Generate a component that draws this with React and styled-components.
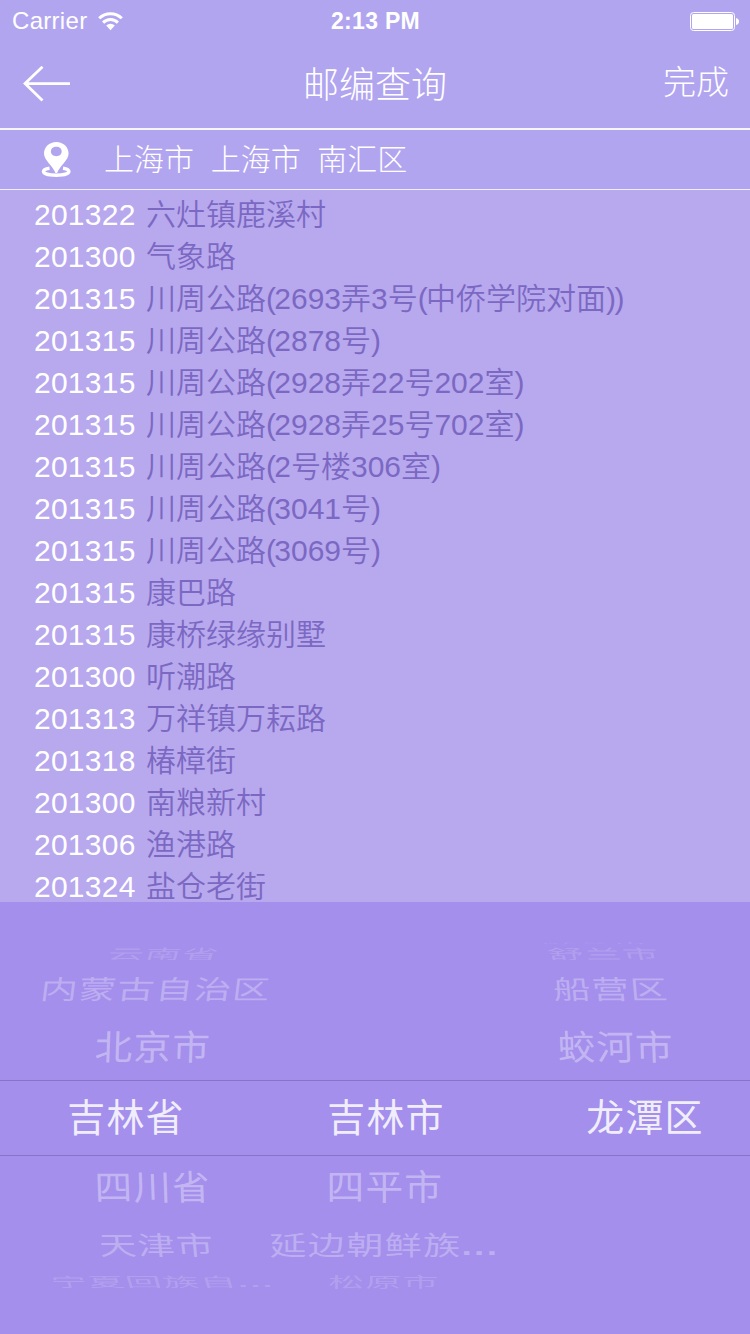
import React from "react";
import styled, { createGlobalStyle } from "styled-components";

const sans = '"Liberation Sans", "Noto Sans CJK SC", sans-serif';

const GlobalStyle = createGlobalStyle`
  body { margin: 0; }
  * { box-sizing: border-box; }
`;

const Screen = styled.div`
  width: 750px;
  height: 1334px;
  display: flex;
  flex-direction: column;
  overflow: hidden;
  background: #b2a5f0;
  color: #fff;
  font-family: ${sans};
  font-weight: 300;
`;

const StatusBar = styled.div`
  height: 40px;
  flex: none;
  display: grid;
  grid-template-columns: 1fr auto 1fr;
  align-items: center;
  padding: 1px 11px 0 12px;
  font-size: 24px;
  line-height: 40px;
`;

const Carrier = styled.div`
  display: flex;
  align-items: center;
  gap: 11px;
  letter-spacing: 0.3px;
`;

const Clock = styled.div`
  font-weight: 700;
  font-size: 23px;
  letter-spacing: 0.3px;
`;

const BatterySlot = styled.div`
  display: flex;
  justify-content: flex-end;
`;

const NavBar = styled.header`
  height: 88px;
  flex: none;
  display: grid;
  grid-template-columns: 1fr auto 1fr;
  align-items: center;
  padding: 0 20px 0 23px;
`;

const Title = styled.h1`
  margin: 0;
  padding: 2px 3px 0 0;
  font: inherit;
  font-size: 36px;
  line-height: 85px;
`;

const DoneButton = styled.button`
  justify-self: end;
  padding: 0 1px 2px 0;
  border: 0;
  background: none;
  color: inherit;
  font: inherit;
  font-size: 33px;
  line-height: 84px;
`;

const LocationBar = styled.div`
  height: 62px;
  flex: none;
  display: flex;
  align-items: center;
  gap: 32px;
  padding-left: 41px;
  border-top: 2px solid #f7f5fd;
  border-bottom: 1px solid #f0edfc;
  font-size: 30px;
  white-space: pre;
`;

const Place = styled.span`
  padding-bottom: 5px;
`;

const List = styled.ul`
  height: 712px;
  flex: none;
  margin: 0;
  padding: 4px 0 0 34px;
  list-style: none;
  overflow: hidden;
  background: #b8a8ee;
`;

const Entry = styled.li`
  height: 42px;
  display: flex;
  gap: 11px;
  font-size: 30px;
  line-height: 42px;
`;

const Code = styled.span`
  width: 101px;
  letter-spacing: 0.25px;
`;

const Address = styled.span`
  color: #7b68c3;
  font-weight: 350;
  white-space: nowrap;
`;

const Bracket = styled.span`
  margin-right: -1.7px;
`;

const Picker = styled.section`
  flex: 1;
  display: grid;
  grid-template-columns: 250px 270px 230px;
  background: #a48fec;
`;

const Wheel = styled.div`
  display: flex;
  flex-direction: column;
  padding-top: 34px;
`;

const Slot = styled.div`
  height: ${(p) => p.$height}px;
  flex: none;
  display: flex;
  align-items: center;
  justify-content: center;
  border: solid #8873c5;
  border-width: ${(p) => (p.$selected ? "1px 0" : "0")};
`;

const Option = styled.span`
  font-size: 38px;
  line-height: 40px;
  font-weight: 400;
  letter-spacing: 1.2px;
  white-space: nowrap;
  color: rgba(255, 255, 255, ${(p) => p.$alpha});
  transform: translate(${(p) => p.$shift}px, ${(p) => p.$drop}px)
    skewX(${(p) => p.$skew}deg) scale(${(p) => p.$sx}, ${(p) => p.$sy});
`;

const Dots = styled.span`
  font-weight: 700;
  letter-spacing: 2.3px;
`;

const entries = [
  ["201322", "六灶镇鹿溪村"],
  ["201300", "气象路"],
  ["201315", "川周公路(2693弄3号(中侨学院对面))"],
  ["201315", "川周公路(2878号)"],
  ["201315", "川周公路(2928弄22号202室)"],
  ["201315", "川周公路(2928弄25号702室)"],
  ["201315", "川周公路(2号楼306室)"],
  ["201315", "川周公路(3041号)"],
  ["201315", "川周公路(3069号)"],
  ["201315", "康巴路"],
  ["201315", "康桥绿缘别墅"],
  ["201300", "听潮路"],
  ["201313", "万祥镇万耘路"],
  ["201318", "椿樟街"],
  ["201300", "南粮新村"],
  ["201306", "渔港路"],
  ["201324", "盐仓老街"],
];

// Slots of the wheel from top to bottom; the outer ones are foreshortened.
const slots = [
  { height: 7, sx: 0.92, sy: 0.06, alpha: 0.1, drop: 3 },
  { height: 22, sx: 0.95, sy: 0.36, alpha: 0.16, drop: 0 },
  { height: 50, sx: 0.98, sy: 0.69, alpha: 0.28, drop: 0 },
  { height: 65, sx: 0.99, sy: 0.92, alpha: 0.36, drop: 0 },
  { height: 76, sx: 1, sy: 1, alpha: 0.86, drop: 0, selected: true },
  { height: 64, sx: 0.99, sy: 0.92, alpha: 0.36, drop: 0 },
  { height: 52, sx: 0.98, sy: 0.69, alpha: 0.28, drop: 0 },
  { height: 20, sx: 0.95, sy: 0.36, alpha: 0.16, drop: 0 },
];

// Each option: label, horizontal shift, skew in degrees, whether it is cut short.
const wheels = [
  [
    null,
    ["云南省", 39, -16],
    ["内蒙古自治区", 31, -7],
    ["北京市", 28, -2],
    ["吉林省", 1, 0],
    ["四川省", 28, 2],
    ["天津市", 32, 6],
    ["宁夏回族自", 37, 16, true],
  ],
  [
    null,
    null,
    null,
    null,
    ["吉林市", 1, 0],
    ["四平市", 0, 0],
    ["延边朝鲜族", -1, 0, true],
    ["松原市", -1, 0],
  ],
  [
    ["舒兰市", -40, 18],
    ["舒兰市", -31, 14],
    ["船营区", -24, 5],
    ["蛟河市", -19, 2],
    ["龙潭区", 10, 0],
    null,
    null,
    null,
  ],
];

const WifiIcon = () => (
  <svg width="25" height="19" viewBox="0 0 25 19">
    <g fill="none" stroke="#fff" strokeWidth="3">
      <path d="M1.2 6.3 A16 16 0 0 1 23.8 6.3" />
      <path d="M5.1 10.6 A10.3 10.3 0 0 1 19.9 10.6" />
    </g>
    <path d="M8.2 13.5 A6 6 0 0 1 16.8 13.5 L12.5 18.2 Z" fill="#fff" />
  </svg>
);

const BatteryIcon = () => (
  <svg width="49" height="19" viewBox="0 0 49 19">
    <rect x="0.5" y="0.5" width="44" height="18" rx="3" fill="none" stroke="#fff" />
    <rect x="2" y="2" width="41" height="15" rx="1.5" fill="#fff" />
    <path d="M46 6 Q49 6.6 49 9.5 Q49 12.4 46 13 Z" fill="#fff" />
  </svg>
);

const BackIcon = () => (
  <svg width="48" height="36" viewBox="0 0 48 36">
    <path d="M19.5 .8 L2 17.6 L19.5 34.6 M2 17.6 H47" fill="none" stroke="#fff" strokeWidth="2.8" />
  </svg>
);

const PinIcon = () => (
  <svg width="31" height="37" viewBox="0 0 31 37">
    <path
      d="M8.5 27.2 C4 27.7 2.6 29.2 2.6 30.6 C2.6 33 8 34.2 15.2 34.2 C22.5 34.2 27.8 33 27.8 30.6 C27.8 29.2 26.3 27.7 22 27.2"
      fill="none"
      stroke="#fff"
      strokeWidth="3.6"
    />
    <path
      fillRule="evenodd"
      fill="#fff"
      d="M15.3 1 C8.3 1 3 6 3 12.5 C3 19.5 12 24.8 14.5 32 H16.1 C18.6 24.8 27.6 19.5 27.6 12.5 C27.6 6 22.3 1 15.3 1 Z M15.3 5.8 C18.6 5.8 20.7 7.8 20.7 10.5 C20.7 13.2 18.6 15.2 15.3 15.2 C12 15.2 9.9 13.2 9.9 10.5 C9.9 7.8 12 5.8 15.3 5.8 Z"
    />
  </svg>
);

const AddressText = ({ text }) => (
  <Address>
    {text
      .split(/([()])/)
      .map((part, i) =>
        part === "(" || part === ")" ? <Bracket key={i}>{part}</Bracket> : part
      )}
  </Address>
);

export default function App() {
  return (
    <Screen>
      <GlobalStyle />
      <StatusBar>
        <Carrier>
          <span>Carrier</span>
          <WifiIcon />
        </Carrier>
        <Clock>2:13 PM</Clock>
        <BatterySlot>
          <BatteryIcon />
        </BatterySlot>
      </StatusBar>
      <NavBar>
        <BackIcon />
        <Title>邮编查询</Title>
        <DoneButton>完成</DoneButton>
      </NavBar>
      <LocationBar>
        <PinIcon />
        <Place>{"上海市  上海市  南汇区"}</Place>
      </LocationBar>
      <List>
        {entries.map(([code, address], i) => (
          <Entry key={i}>
            <Code>{code}</Code>
            <AddressText text={address} />
          </Entry>
        ))}
      </List>
      <Picker>
        {wheels.map((options, w) => (
          <Wheel key={w}>
            {slots.map((s, i) => (
              <Slot key={i} $height={s.height} $selected={s.selected}>
                {options[i] && (
                  <Option
                    $shift={options[i][1]}
                    $skew={options[i][2]}
                    $drop={s.drop}
                    $sx={s.sx}
                    $sy={s.sy}
                    $alpha={s.alpha}
                  >
                    {options[i][0]}
                    {options[i][3] && <Dots>...</Dots>}
                  </Option>
                )}
              </Slot>
            ))}
          </Wheel>
        ))}
      </Picker>
    </Screen>
  );
}
